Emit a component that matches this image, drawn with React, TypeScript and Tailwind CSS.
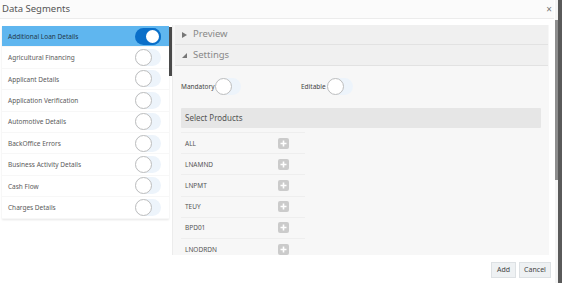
import React from "react";

const segments = [
  "Additional Loan Details",
  "Agricultural Financing",
  "Applicant Details",
  "Application Verification",
  "Automotive Details",
  "BackOffice Errors",
  "Business Activity Details",
  "Cash Flow",
  "Charges Details",
];

const products = ["ALL", "LNAMND", "LNPMT", "TEUY", "BPD01", "LNODRDN"];

function Toggle({ on = false }: { on?: boolean }) {
  return (
    <div
      className={`relative w-[26px] h-[17px] rounded-full ${
        on ? "bg-[#0a6fc9]" : "bg-[#edf4fb]"
      }`}
    >
      <div
        className={`absolute top-0 w-[17px] h-[17px] rounded-full bg-white ${
          on ? "right-0 border-2 border-[#0a6fc9]" : "left-0 border border-[#bdbdbd]"
        }`}
      />
    </div>
  );
}

function PlusBox() {
  return (
    <div className="w-[11px] h-[11px] rounded-[2px] bg-[#cbcbcb] flex items-center justify-center">
      <svg width="7" height="7" viewBox="0 0 7 7">
        <path d="M3.5 0.5v6M0.5 3.5h6" stroke="#fff" strokeWidth="1.6" />
      </svg>
    </div>
  );
}

export default function App() {
  return (
    <div
      className="w-[562px] h-[283px] flex overflow-hidden bg-white text-[#333]"
      style={{ fontFamily: '"Noto Sans", "Open Sans", sans-serif' }}
    >
      {/* dialog */}
      <div className="w-[554px] h-full flex flex-col bg-white">
        {/* header */}
        <div className="h-[19px] shrink-0 flex items-center justify-between border-b border-[#ececec] bg-[#fbfbfb] pl-[2px] pr-[2px]">
          <span className="text-[9.5px] text-[#555]">Data Segments</span>
          <span className="text-[10px] text-[#777] leading-none">×</span>
        </div>

        {/* body */}
        <div className="flex-1 flex pt-[6px] min-h-0">
          {/* segment list */}
          <div className="w-[172px] shrink-0 pl-[2px] pt-[1px]">
            <div className="relative w-[167px] bg-white shadow-[0_1px_2px_rgba(0,0,0,0.1)]">
              {segments.map((s, i) => (
                <div
                  key={s}
                  className={`h-[21.4px] flex items-center justify-between pl-[6px] pr-[8px] border-b border-[#f7f7f7] ${
                    i === 0 ? "bg-[#5fb6ef]" : ""
                  }`}
                >
                  <span className={`text-[6.5px] pt-[1px] ${i === 0 ? "text-[#22384a]" : "text-[#5a5a5a]"}`}>{s}</span>
                  <Toggle on={i === 0} />
                </div>
              ))}
              <div className="absolute top-[1px] right-[-3px] w-[3px] h-[49px] bg-[#4a4a4a]" />
            </div>
          </div>

          {/* settings panel */}
          <div className="w-[377px] h-[230px] bg-[#f7f7f7] border-l border-[#ececec] pl-[2px] pr-[1px]">
            <div className="h-[20px] flex items-center bg-[#f0f0f0] border-b border-[#e2e2e2] pl-[7px] gap-[6px]">
              <svg width="5" height="6" viewBox="0 0 5 6">
                <path d="M0 0L5 3L0 6Z" fill="#777" />
              </svg>
              <span className="text-[9.5px] text-[#888]">Preview</span>
            </div>
            <div className="h-[21px] flex items-center bg-[#f0f0f0] border-b border-[#e2e2e2] pl-[7px] gap-[6px]">
              <svg width="5" height="5" viewBox="0 0 5 5">
                <path d="M5 0L5 5L0 5Z" fill="#777" />
              </svg>
              <span className="text-[9.5px] text-[#888]">Settings</span>
            </div>

            <div className="pl-[6px] pr-[7px] pt-[12px]">
              <div className="flex items-center h-[17px]">
                <span className="text-[6.5px] text-[#444] w-[34px]">Mandatory</span>
                <Toggle />
                <span className="text-[6.5px] text-[#444] ml-[60px] w-[26px]">Editable</span>
                <Toggle />
              </div>

              <div className="mt-[13px] h-[20px] flex items-center bg-[#e6e6e6] pl-[4px] rounded-[1px]">
                <span className="text-[8px] text-[#555]">Select Products</span>
              </div>

              <div className="w-[124px] mt-[4px]">
                {products.map((p) => (
                  <div
                    key={p}
                    className="h-[21.2px] flex items-center justify-between pl-[4px] pr-[16px] border-t border-[#eeeeee]"
                  >
                    <span className="text-[6.5px] text-[#555] pt-[1px]">{p}</span>
                    <PlusBox />
                  </div>
                ))}
              </div>
            </div>
          </div>
        </div>

        {/* footer */}
        <div className="h-[28px] shrink-0 flex items-center justify-end gap-[3px] pr-[3px] pt-[2px]">
          <button className="h-[16px] w-[25px] bg-[#eef1f3] border border-[#dde1e4] text-[7px] text-[#444]">
            Add
          </button>
          <button className="h-[16px] w-[32px] bg-[#eef1f3] border border-[#dde1e4] text-[7px] text-[#444]">
            Cancel
          </button>
        </div>
      </div>

      {/* page scrollbar / backdrop */}
      <div className="w-[8px] h-full flex">
        <div className="w-[1px] bg-white" />
        <div className="w-[3px] bg-[#f4f4f4] pt-[20px]">
          <div className="h-[160px] bg-[#8e8e8e]" />
        </div>
        <div className="flex-1 bg-[#5a5a5a]" />
      </div>
    </div>
  );
}
